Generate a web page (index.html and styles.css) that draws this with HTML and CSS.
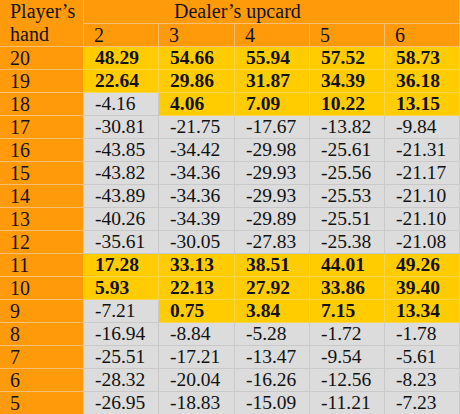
FILE: index.html
```html
<!DOCTYPE html>
<html lang="en">
<head>
    <meta charset="UTF-8">
    <title>Expected value by player's hand and dealer's upcard</title>
    <link rel="stylesheet" href="styles.css">
</head>
<body>
    <table class="ev-table">
        <colgroup>
            <col class="col-hand">
            <col class="col-a">
            <col class="col-b">
            <col class="col-a">
            <col class="col-a">
            <col class="col-a">
        </colgroup>
        <tr>
            <th class="head hand-head" rowspan="2">Player’s hand</th>
            <th class="head dealer-head" colspan="5">Dealer’s upcard</th>
        </tr>
        <tr>
            <th class="head">2</th>
            <th class="head">3</th>
            <th class="head">4</th>
            <th class="head">5</th>
            <th class="head">6</th>
        </tr>
        <tr><th class="head">20</th><td class="good">48.29</td><td class="good">54.66</td><td class="good">55.94</td><td class="good">57.52</td><td class="good">58.73</td></tr>
        <tr><th class="head">19</th><td class="good">22.64</td><td class="good">29.86</td><td class="good">31.87</td><td class="good">34.39</td><td class="good">36.18</td></tr>
        <tr><th class="head">18</th><td>-4.16</td><td class="good">4.06</td><td class="good">7.09</td><td class="good">10.22</td><td class="good">13.15</td></tr>
        <tr><th class="head">17</th><td>-30.81</td><td>-21.75</td><td>-17.67</td><td>-13.82</td><td>-9.84</td></tr>
        <tr><th class="head">16</th><td>-43.85</td><td>-34.42</td><td>-29.98</td><td>-25.61</td><td>-21.31</td></tr>
        <tr><th class="head">15</th><td>-43.82</td><td>-34.36</td><td>-29.93</td><td>-25.56</td><td>-21.17</td></tr>
        <tr><th class="head">14</th><td>-43.89</td><td>-34.36</td><td>-29.93</td><td>-25.53</td><td>-21.10</td></tr>
        <tr><th class="head">13</th><td>-40.26</td><td>-34.39</td><td>-29.89</td><td>-25.51</td><td>-21.10</td></tr>
        <tr><th class="head">12</th><td>-35.61</td><td>-30.05</td><td>-27.83</td><td>-25.38</td><td>-21.08</td></tr>
        <tr><th class="head">11</th><td class="good">17.28</td><td class="good">33.13</td><td class="good">38.51</td><td class="good">44.01</td><td class="good">49.26</td></tr>
        <tr><th class="head">10</th><td class="good">5.93</td><td class="good">22.13</td><td class="good">27.92</td><td class="good">33.86</td><td class="good">39.40</td></tr>
        <tr><th class="head">9</th><td>-7.21</td><td class="good">0.75</td><td class="good">3.84</td><td class="good">7.15</td><td class="good">13.34</td></tr>
        <tr><th class="head">8</th><td>-16.94</td><td>-8.84</td><td>-5.28</td><td>-1.72</td><td>-1.78</td></tr>
        <tr><th class="head">7</th><td>-25.51</td><td>-17.21</td><td>-13.47</td><td>-9.54</td><td>-5.61</td></tr>
        <tr><th class="head">6</th><td>-28.32</td><td>-20.04</td><td>-16.26</td><td>-12.56</td><td>-8.23</td></tr>
        <tr><th class="head">5</th><td>-26.95</td><td>-18.83</td><td>-15.09</td><td>-11.21</td><td>-7.23</td></tr>
    </table>
</body>
</html>
```

FILE: styles.css
```css
body {
    margin: 0;
    background-color: #fff;
}
.ev-table {
    width: 460px;
    table-layout: fixed;
    border-collapse: separate;
    border-spacing: 0;
    font-family: "Liberation Serif", "Times New Roman", serif;
    font-size: 20px;
    color: #111;
}
.col-hand {
    width: 84px;
}
.col-a {
    width: 75px;
}
.col-b {
    width: 76px;
}
th, td {
    height: 22px;
    padding: 0 0 0 10px;
    line-height: 22px;
    text-align: left;
    font-weight: normal;
    white-space: nowrap;
    overflow: hidden;
    background-color: #dcdcdc;
    border-right: 1px solid #c9c9c9;
    border-bottom: 1px solid #c9c9c9;
}
td {
    padding-left: 11px;
    font-size: 19.5px;
}
.head {
    background-color: #ff9a0a;
    border-color: #f8bf74;
}
.hand-head {
    white-space: normal;
    vertical-align: top;
    line-height: 23px;
    padding-right: 4px;
}
.dealer-head {
    padding-left: 90px;
}
.good {
    background-color: #ffcc00;
    border-color: #f7d350;
    font-weight: bold;
}
```
